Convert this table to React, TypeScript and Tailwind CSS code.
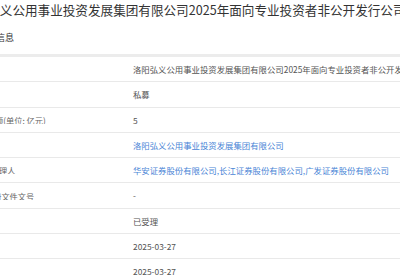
import React from "react";

type Row = { label: string; labelMl: string; value: string; link?: boolean };

const rows: Row[] = [
  { label: "债券名称", labelMl: "ml-[-60px]", value: "洛阳弘义公用事业投资发展集团有限公司2025年面向专业投资者非公开发行公司债券" },
  { label: "发行方式", labelMl: "ml-[-60px]", value: "私募" },
  { label: "发行金额(单位: 亿元)", labelMl: "ml-[-29.5px]", value: "5" },
  { label: "发行人", labelMl: "ml-[-60px]", value: "洛阳弘义公用事业投资发展集团有限公司", link: true },
  { label: "承销商/管理人", labelMl: "ml-[-37px]", value: "华安证券股份有限公司,长江证券股份有限公司,广发证券股份有限公司", link: true },
  { label: "注册文件文号", labelMl: "ml-[-15px]", value: "-" },
  { label: "项目状态", labelMl: "ml-[-60px]", value: "已受理" },
  { label: "受理日期", labelMl: "ml-[-60px]", value: "2025-03-27" },
  { label: "更新日期", labelMl: "ml-[-60px]", value: "2025-03-27" },
];

export default function App() {
  return (
    <div
      className="w-[400px] h-[280px] overflow-hidden bg-white"
      style={{ fontFamily: '"Noto Sans CJK SC", "Noto Sans", sans-serif' }}
    >
      <div className="h-[20px] flex items-center whitespace-nowrap">
        <span className="ml-[-38px] text-[12.6px] leading-none text-[#333]">
          洛阳弘义公用事业投资发展集团有限公司2025年面向专业投资者非公开发行公司债券
        </span>
      </div>
      <div className="h-[34px] flex items-center whitespace-nowrap">
        <span className="ml-[-22px] text-[9px] leading-none text-[#333]">基本信息</span>
      </div>
      <div className="h-[3px] bg-[#ececec]" />
      <div className="flex flex-col">
        {rows.map((r, i) => (
          <div
            key={i}
            className="h-[25.3px] flex items-center border-b border-[#e9e9e9] whitespace-nowrap"
          >
            <div className="w-[133px] shrink-0 overflow-hidden">
              <span className={`${r.labelMl} block text-[8.2px] leading-none text-[#666]`}>
                {r.label}
              </span>
            </div>
            <span
              className={`text-[8.4px] leading-none ${r.link ? "text-[#4a85d6]" : "text-[#555]"}`}
            >
              {r.value}
            </span>
          </div>
        ))}
      </div>
    </div>
  );
}
